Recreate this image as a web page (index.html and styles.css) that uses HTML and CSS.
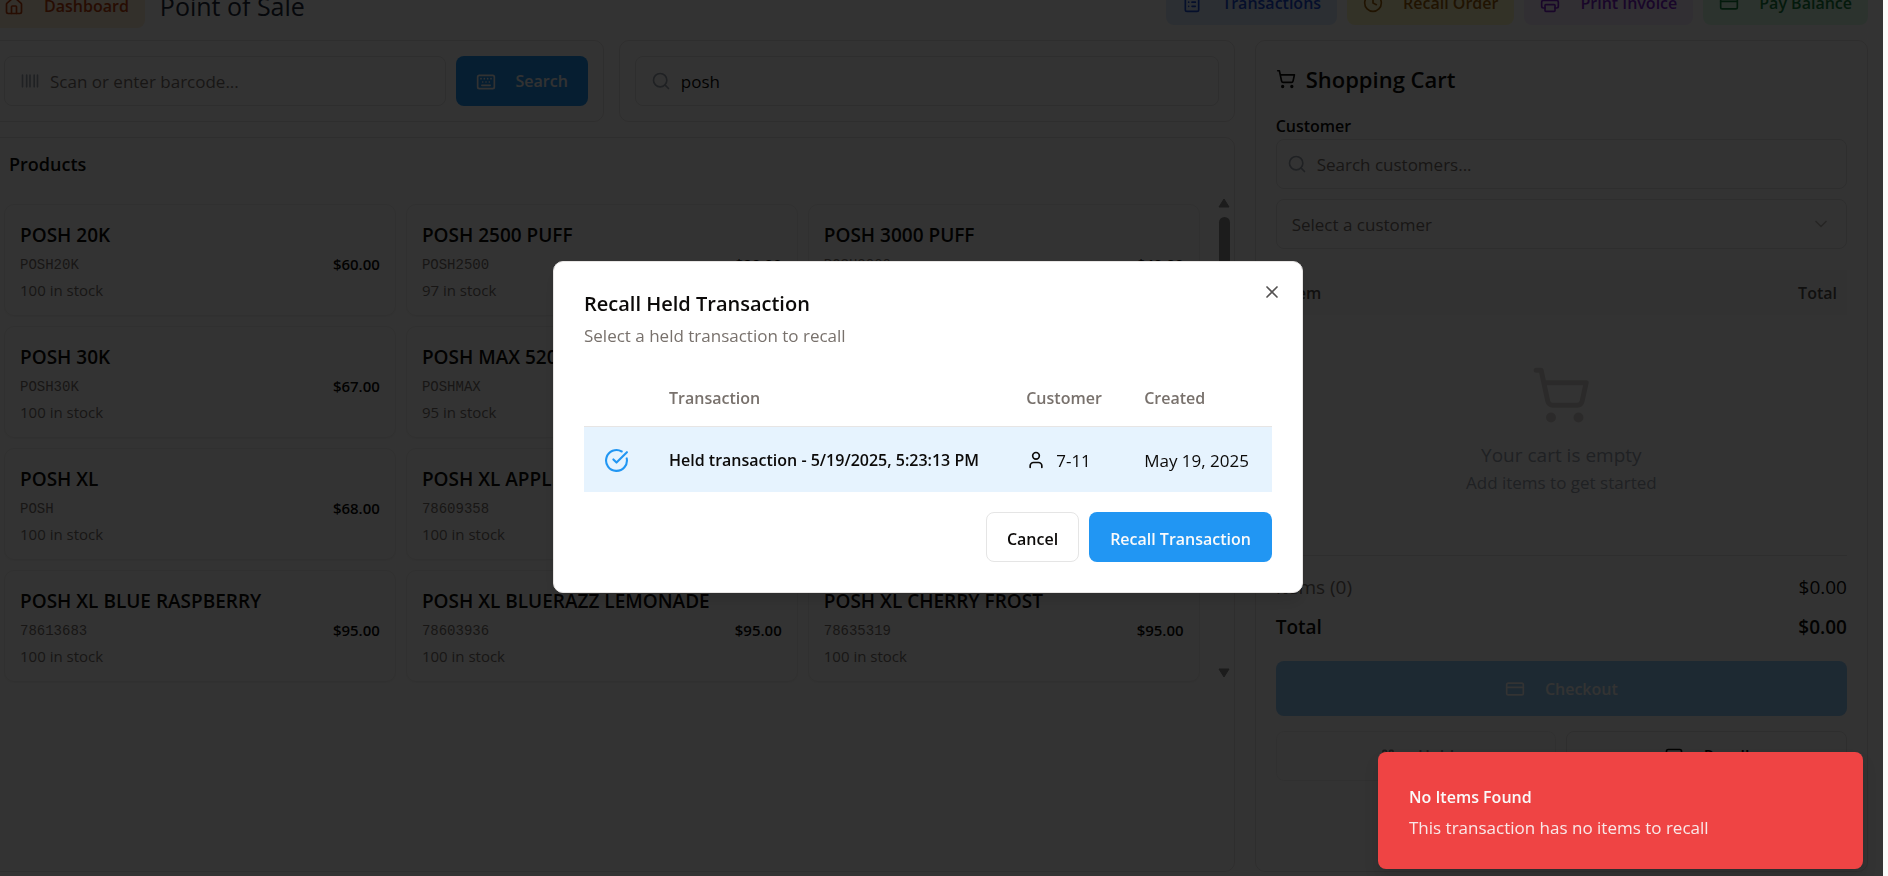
FILE: index.html
```html
<!DOCTYPE html>
<html lang="en">
<head>
<meta charset="utf-8">
<title>Point of Sale</title>
<link rel="stylesheet" href="styles.css">
</head>
<body>
<svg class="sprite" aria-hidden="true">
  <symbol id="i-home" viewBox="0 0 24 24"><path d="M15 21v-8a1 1 0 0 0-1-1h-4a1 1 0 0 0-1 1v8"/><path d="M3 10a2 2 0 0 1 .709-1.528l7-5.999a2 2 0 0 1 2.582 0l7 5.999A2 2 0 0 1 21 10v9a2 2 0 0 1-2 2H5a2 2 0 0 1-2-2z"/></symbol>
  <symbol id="i-list" viewBox="0 0 24 24"><rect x="8" y="2" width="8" height="4" rx="1"/><path d="M16 4h2a2 2 0 0 1 2 2v14a2 2 0 0 1-2 2H6a2 2 0 0 1-2-2V6a2 2 0 0 1 2-2h2M12 11h4M12 16h4M8 11h.01M8 16h.01"/></symbol>
  <symbol id="i-clock" viewBox="0 0 24 24"><circle cx="12" cy="12" r="10"/><path d="M12 6v6l4 2"/></symbol>
  <symbol id="i-printer" viewBox="0 0 24 24"><path d="M6 18H4a2 2 0 0 1-2-2v-5a2 2 0 0 1 2-2h16a2 2 0 0 1 2 2v5a2 2 0 0 1-2 2h-2M6 9V3a1 1 0 0 1 1-1h10a1 1 0 0 1 1 1v6"/><rect x="6" y="14" width="12" height="8" rx="1"/></symbol>
  <symbol id="i-card" viewBox="0 0 24 24"><rect x="2" y="5" width="20" height="14" rx="2"/><path d="M2 10h20"/></symbol>
  <symbol id="i-barcode" viewBox="0 0 24 24"><path d="M3 5v14M8 5v14M12 5v14M17 5v14M21 5v14"/></symbol>
  <symbol id="i-keyboard" viewBox="0 0 24 24"><rect x="2" y="4" width="20" height="16" rx="2"/><path d="M6 8h.01M10 8h.01M14 8h.01M18 8h.01M8 12h.01M12 12h.01M16 12h.01M7 16h10"/></symbol>
  <symbol id="i-search" viewBox="0 0 24 24"><circle cx="11" cy="11" r="8"/><path d="m21 21-4.3-4.3"/></symbol>
  <symbol id="i-cart" viewBox="0 0 24 24"><circle cx="8" cy="21" r="1"/><circle cx="19" cy="21" r="1"/><path d="M2.05 2.05h2l2.66 12.42a2 2 0 0 0 2 1.58h9.78a2 2 0 0 0 1.95-1.57l1.65-7.43H5.12"/></symbol>
  <symbol id="i-chevron" viewBox="0 0 24 24"><path d="m6 9 6 6 6-6"/></symbol>
  <symbol id="i-pause" viewBox="0 0 24 24"><rect x="14" y="4" width="4" height="16" rx="1"/><rect x="6" y="4" width="4" height="16" rx="1"/></symbol>
  <symbol id="i-square" viewBox="0 0 24 24"><rect x="3" y="3" width="18" height="18" rx="2"/></symbol>
  <symbol id="i-check" viewBox="0 0 24 24"><path d="M21.801 10A10 10 0 1 1 17 3.335"/><path d="m9 11 3 3L22 4"/></symbol>
  <symbol id="i-user" viewBox="0 0 24 24"><path d="M19 21v-2a4 4 0 0 0-4-4H9a4 4 0 0 0-4 4v2"/><circle cx="12" cy="7" r="4"/></symbol>
  <symbol id="i-x" viewBox="0 0 24 24"><path d="M18 6 6 18M6 6l12 12"/></symbol>
</svg>

<div class="page">
  <header class="topbar">
    <div class="topbar-left">
      <button class="btn nav-btn orange"><svg class="icon"><use href="#i-home"/></svg>Dashboard</button>
      <h1>Point of Sale</h1>
    </div>
    <nav class="topbar-right">
      <button class="btn nav-btn blue"><svg class="icon"><use href="#i-list"/></svg>Transactions</button>
      <button class="btn nav-btn yellow"><svg class="icon"><use href="#i-clock"/></svg>Recall Order</button>
      <button class="btn nav-btn purple"><svg class="icon"><use href="#i-printer"/></svg>Print Invoice</button>
      <button class="btn nav-btn green"><svg class="icon"><use href="#i-card"/></svg>Pay Balance</button>
    </nav>
  </header>

  <main class="layout">
    <div class="catalog">
      <div class="search-row">
        <form class="card search-card">
          <label class="field"><svg class="icon"><use href="#i-barcode"/></svg><input type="text" placeholder="Scan or enter barcode..." aria-label="Barcode"></label>
          <button type="button" class="btn primary"><svg class="icon"><use href="#i-keyboard"/></svg>Search</button>
        </form>
        <form class="card search-card">
          <label class="field"><svg class="icon"><use href="#i-search"/></svg><input type="text" value="posh" aria-label="Search products"></label>
        </form>
      </div>

      <section class="card products">
        <h2>Products</h2>
        <div class="product-scroll">
          <div class="product-grid">
            <article class="product"><h3>POSH 20K</h3><div class="line"><code>POSH20K</code><b>$60.00</b></div><p>100 in stock</p></article>
            <article class="product"><h3>POSH 2500 PUFF</h3><div class="line"><code>POSH2500</code><b>$20.00</b></div><p>97 in stock</p></article>
            <article class="product"><h3>POSH 3000 PUFF</h3><div class="line"><code>POSH3000</code><b>$40.00</b></div><p>100 in stock</p></article>
            <article class="product"><h3>POSH 30K</h3><div class="line"><code>POSH30K</code><b>$67.00</b></div><p>100 in stock</p></article>
            <article class="product"><h3>POSH MAX 5200</h3><div class="line"><code>POSHMAX</code><b>$50.00</b></div><p>95 in stock</p></article>
            <article class="product"><h3>POSH PLUS</h3><div class="line"><code>POSHPLUS</code><b>$50.00</b></div><p>100 in stock</p></article>
            <article class="product"><h3>POSH XL</h3><div class="line"><code>POSH</code><b>$68.00</b></div><p>100 in stock</p></article>
            <article class="product"><h3>POSH XL APPLE</h3><div class="line"><code>78609358</code><b>$95.00</b></div><p>100 in stock</p></article>
            <article class="product"><h3>POSH XL BANANA</h3><div class="line"><code>78609359</code><b>$95.00</b></div><p>100 in stock</p></article>
            <article class="product"><h3>POSH XL BLUE RASPBERRY</h3><div class="line"><code>78613683</code><b>$95.00</b></div><p>100 in stock</p></article>
            <article class="product"><h3>POSH XL BLUERAZZ LEMONADE</h3><div class="line"><code>78603936</code><b>$95.00</b></div><p>100 in stock</p></article>
            <article class="product"><h3>POSH XL CHERRY FROST</h3><div class="line"><code>78635319</code><b>$95.00</b></div><p>100 in stock</p></article>
          </div>
          <div class="scrollbar" aria-hidden="true">
            <svg class="arrow" viewBox="0 0 12 10"><path d="M6 1 11 9H1z"/></svg>
            <div class="thumb"></div>
            <svg class="arrow" viewBox="0 0 12 10"><path d="M6 9 11 1H1z"/></svg>
          </div>
        </div>
      </section>
    </div>

    <aside class="card cart">
      <h2><svg class="icon"><use href="#i-cart"/></svg>Shopping Cart</h2>
      <label class="cart-label" for="customer-search">Customer</label>
      <div class="cart-fields">
        <div class="field tight"><svg class="icon"><use href="#i-search"/></svg><input id="customer-search" type="text" placeholder="Search customers..."></div>
        <div class="field select-field"><select aria-label="Customer"><option>Select a customer</option></select><svg class="icon"><use href="#i-chevron"/></svg></div>
      </div>
      <div class="cart-head"><span>Item</span><span>Total</span></div>
      <div class="cart-empty">
        <svg class="icon big"><use href="#i-cart"/></svg>
        <p class="empty-title">Your cart is empty</p>
        <p>Add items to get started</p>
      </div>
      <div class="totals">
        <div class="total-line"><span class="muted">Items (0)</span><span>$0.00</span></div>
        <div class="total-line strong"><span>Total</span><span>$0.00</span></div>
      </div>
      <button class="btn primary checkout" disabled><svg class="icon"><use href="#i-card"/></svg>Checkout</button>
      <div class="cart-actions">
        <button class="btn outline" disabled><svg class="icon"><use href="#i-pause"/></svg>Hold</button>
        <button class="btn outline"><svg class="icon"><use href="#i-square"/></svg>Recall</button>
      </div>
    </aside>
  </main>
</div>

<div class="backdrop"></div>
<div class="modal-wrap">
  <section class="modal" role="dialog" aria-labelledby="modal-title">
    <button class="close" aria-label="Close"><svg class="icon"><use href="#i-x"/></svg></button>
    <div class="modal-head">
      <h2 id="modal-title">Recall Held Transaction</h2>
      <p>Select a held transaction to recall</p>
    </div>
    <table>
      <thead><tr><th class="check"></th><th>Transaction</th><th>Customer</th><th>Created</th></tr></thead>
      <tbody><tr>
        <td class="check"><svg class="icon"><use href="#i-check"/></svg></td>
        <td class="name">Held transaction - 5/19/2025, 5:23:13 PM</td>
        <td><span class="person"><svg class="icon"><use href="#i-user"/></svg>7-11</span></td>
        <td>May 19, 2025</td>
      </tr></tbody>
    </table>
    <div class="modal-foot">
      <button class="btn outline">Cancel</button>
      <button class="btn primary">Recall Transaction</button>
    </div>
  </section>
</div>

<div class="toast" role="alert">
  <strong>No Items Found</strong>
  <p>This transaction has no items to recall</p>
</div>
</body>
</html>
```

FILE: styles.css
```css
* { box-sizing: border-box; }

body {
  margin: 0;
  overflow: hidden;
  background: #fafafa;
  color: #0c0a09;
  font: 17px/25px "Segoe UI", "Open Sans", "Noto Sans", sans-serif;
}

h1, h2, h3, p { margin: 0; font-weight: 600; }
p { font-weight: 400; }
button, input, select { font: inherit; color: inherit; }
.sprite { display: none; }

.icon {
  width: 20px;
  height: 20px;
  flex: none;
  fill: none;
  stroke: currentColor;
  stroke-width: 2;
  stroke-linecap: round;
  stroke-linejoin: round;
}

.btn {
  display: inline-flex;
  align-items: center;
  justify-content: center;
  gap: 20px;
  height: 50px;
  padding: 1px 19px 0;
  border: 1px solid transparent;
  border-radius: 8px;
  background: none;
  font-size: 16px;
  font-weight: 600;
  white-space: nowrap;
}
.btn:disabled { opacity: 0.5; }
.primary { background: #2196f3; color: #fafafa; }
.outline { border-color: #e5e5e5; background: #fff; }

.nav-btn { height: 45px; padding: 1px 15px 0; }
.orange { background: #ffedd5; color: #c2410c; }
.blue { background: #dbeafe; color: #1d4ed8; }
.yellow { background: #fef9c3; color: #a16207; }
.purple { background: #f3e8ff; color: #7e22ce; }
.green { background: #dcfce7; color: #15803d; }

/* The page is scrolled slightly past its top left corner. */
.page {
  display: flex;
  flex-direction: column;
  height: calc(100vh + 20px);
  margin: -20px 5px 0 -27px;
  padding: 0 15px 4px;
  background: #fff;
}

.topbar { display: flex; justify-content: space-between; align-items: flex-start; height: 60px; flex: none; }
.topbar-left { display: flex; align-items: center; gap: 15px; height: 51px; }
.topbar-right { display: flex; gap: 10px; }
h1 { padding-top: 1px; font-size: 25px; line-height: 30px; font-weight: 500; color: #1e293b; }

.layout { display: grid; grid-template-columns: repeat(3, 1fr); gap: 20px; flex: 1; min-height: 0; }
.catalog { grid-column: span 2; display: flex; flex-direction: column; gap: 15px; min-height: 0; }
.card { border: 1px solid #e7e5e4; border-radius: 10px; background: #fff; }

.search-row { display: grid; grid-template-columns: 1fr 1fr; gap: 15px; }
.search-card { display: flex; gap: 10px; padding: 15px; }

.field {
  display: flex;
  align-items: center;
  flex: 1;
  gap: 10px;
  height: 50px;
  padding: 0 15px;
  border: 1px solid #e5e5e5;
  border-radius: 8px;
  color: #9ca3af;
}
.field.tight { padding: 0 10px; }
.field input, .field select {
  flex: 1;
  min-width: 0;
  padding: 1px 0 0;
  border: 0;
  outline: 0;
  background: none;
  color: #0c0a09;
}
.field input::placeholder { color: #78716c; opacity: 1; }
.field select { appearance: none; color: #78716c; }
.select-field .icon { color: #78716c; opacity: 0.5; }

.products { flex: 1; overflow: hidden; }
.products h2 { padding: 14px 20px 12px; font-size: 18px; }
.product-scroll { display: flex; justify-content: space-between; }
.product-grid {
  display: grid;
  grid-template-columns: repeat(3, 1fr);
  grid-auto-rows: 112px;
  gap: 10px;
  flex: 1;
  padding: 15px 16px 0 15px;
}
.product { padding: 15px; border: 1px solid #efeeed; border-radius: 10px; box-shadow: 0 1px 2px rgba(0, 0, 0, 0.05); }
.product h3 { font-size: 19px; line-height: 30px; white-space: nowrap; }
.product .line { display: flex; justify-content: space-between; align-items: center; height: 29px; }
.product code { font: 14px/20px "Liberation Mono", monospace; color: #78716c; }
.product b { font-size: 15px; font-weight: 600; }
.product p { font-size: 15px; line-height: 22px; color: #78716c; }

.scrollbar { display: flex; flex-direction: column; align-items: center; width: 18px; padding: 9px 1px 4px 0; background: #fcfcfc; }
.arrow { width: 12px; height: 10px; fill: #8b8b8b; stroke: #8b8b8b; stroke-linejoin: round; }
.thumb { width: 11px; height: 260px; margin: 9px 0 auto; border-radius: 6px; background: #8b8b8b; }

.cart { display: flex; flex-direction: column; padding: 20px; }
.cart h2 { display: flex; align-items: center; gap: 10px; height: 36px; font-size: 22px; }
.cart-label { height: 42px; padding-top: 17px; font-size: 16px; font-weight: 600; }
.cart-fields { display: flex; flex-direction: column; gap: 10px; }
.cart-fields .field { flex: none; }
.cart-head {
  display: flex;
  justify-content: space-between;
  margin-top: 21px;
  padding: 11px 10px 9px;
  background: #fafafa;
  color: #57534e;
  font-size: 16px;
  font-weight: 600;
}
.cart-empty { flex: none; display: flex; flex-direction: column; align-items: center; height: 240px; padding-top: 50px; color: #9ca3af; }
.icon.big { width: 60px; height: 60px; margin-bottom: 15px; color: #d6d3d1; }
.empty-title { font-size: 19px; line-height: 30px; }
.totals { border-top: 1px solid #e7e5e4; padding-top: 11px; font-size: 19px; }
.total-line { display: flex; justify-content: space-between; line-height: 40px; }
.muted { color: #78716c; }
.strong { font-weight: 600; }
.checkout { height: 55px; margin-top: 14px; flex: none; }
.cart-actions { display: grid; grid-template-columns: 1fr 1fr; gap: 10px; margin-top: 15px; }

.backdrop { position: fixed; inset: 0 5px 0 0; background: rgba(0, 0, 0, 0.8); }
.modal-wrap { position: fixed; inset: -22px 5px 0 -27px; display: flex; align-items: center; justify-content: center; }
.modal {
  position: relative;
  display: flex;
  flex-direction: column;
  gap: 20px;
  width: 750px;
  padding: 30px;
  border: 1px solid #e7e5e4;
  border-radius: 10px;
  background: #fff;
  box-shadow: 0 10px 15px rgba(0, 0, 0, 0.1);
}
.modal-head h2 { margin-bottom: 7px; font-size: 20px; line-height: 24px; }
.modal-head p { color: #78716c; }
.close { position: absolute; top: 20px; right: 20px; display: flex; padding: 0; border: 0; background: none; opacity: 0.7; }

table { width: 100%; border-collapse: collapse; white-space: nowrap; }
th { height: 58px; padding: 4px 20px 0; text-align: left; font-size: 16px; font-weight: 600; color: #78716c; }
tbody tr { border-top: 1px solid #e7e5e4; background: #e6f3fe; }
td { height: 66px; padding: 2px 20px 0; }
.name { font-size: 16px; font-weight: 600; }
.check { width: 65px; }
.check .icon { display: block; width: 25px; height: 25px; color: #2196f3; }
.person { display: flex; align-items: center; gap: 10px; }
.modal-foot { display: flex; justify-content: flex-end; gap: 10px; }
.modal-foot .btn { padding: 4px 20px 0; }

.toast {
  position: fixed;
  right: 25px;
  bottom: 7px;
  width: 485px;
  padding: 33px 31px 29px;
  border-radius: 8px;
  background: #ef4444;
  color: #fafafa;
  box-shadow: 0 10px 15px rgba(0, 0, 0, 0.1);
}
.toast strong { display: block; margin-bottom: 5px; font-size: 16px; font-weight: 600; }
.toast p { opacity: 0.9; }
```
